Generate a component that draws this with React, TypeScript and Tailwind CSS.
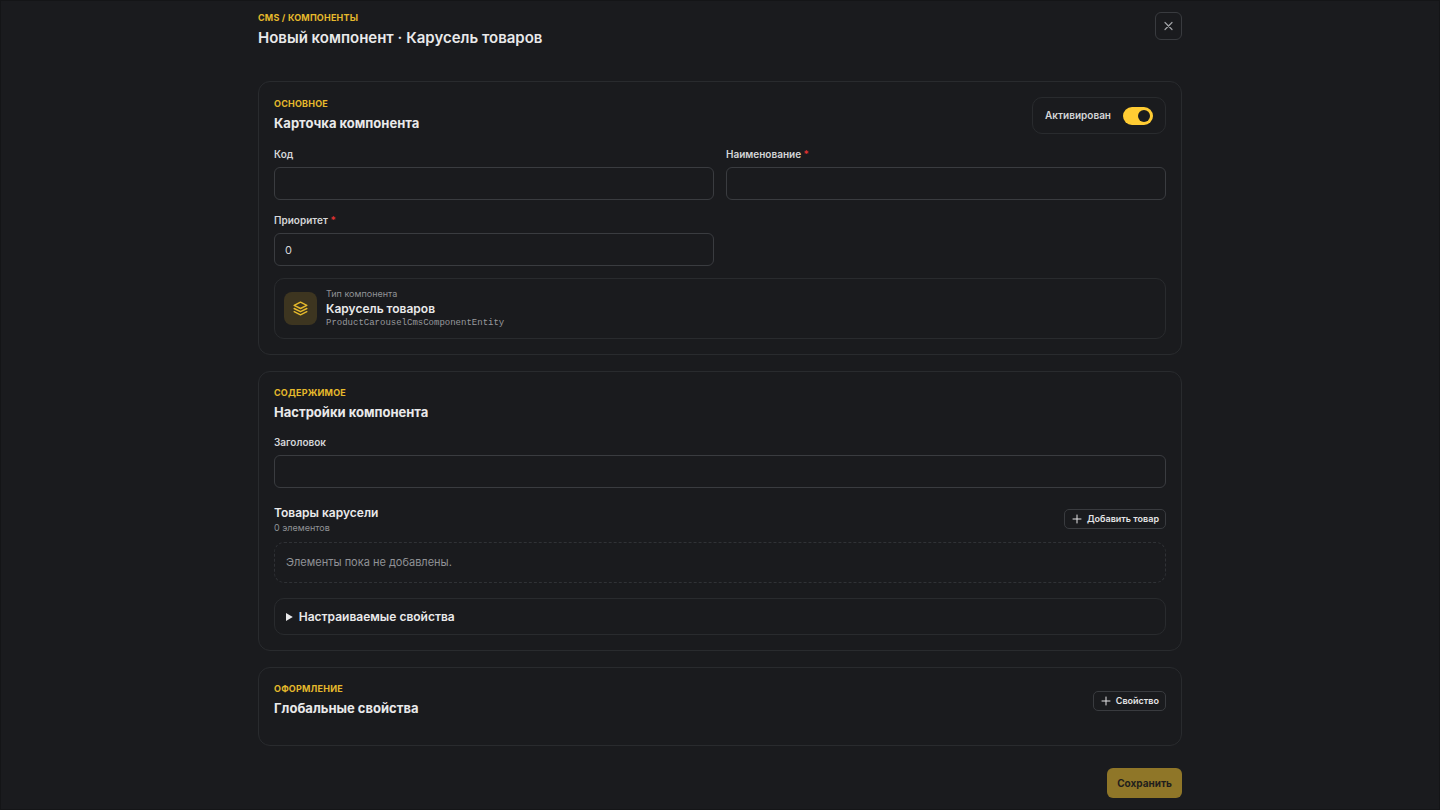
import { useState, type ReactNode } from "react";

function SectionHeading({ eyebrow, title, children }: { eyebrow: string; title: string; children?: ReactNode }) {
  return (
    <div className="flex items-center justify-between gap-4">
      <div className="flex flex-col gap-[3px]">
        <p className="text-[9px] leading-3 font-bold uppercase tracking-[0.2px] text-[#e5b92c]">{eyebrow}</p>
        <h2 className="text-[13px] leading-5 font-bold text-[#e9e9ea]">{title}</h2>
      </div>
      {children}
    </div>
  );
}

function Card({ children }: { children: ReactNode }) {
  return (
    <section className="flex flex-col gap-3 rounded-xl border border-[#292b2e] bg-[#1a1b1e] p-[15px]">{children}</section>
  );
}

function Field({
  id,
  label,
  required,
  defaultValue,
}: {
  id: string;
  label: string;
  required?: boolean;
  defaultValue?: string;
}) {
  return (
    <div className="flex flex-col gap-[5px]">
      <label htmlFor={id} className="text-[10px] leading-4 font-semibold text-[#d5d6d8]">
        {label}
        {required && <span className="text-[#e03131]"> *</span>}
      </label>
      <input
        id={id}
        type="text"
        required={required}
        defaultValue={defaultValue}
        className="h-[33px] w-full rounded-md border border-[#3a3c40] bg-[#1a1b1e] px-2.5 text-[11px] text-[#d5d6d8] shadow-none outline-none focus:border-[#ffcc33]"
      />
    </div>
  );
}

function AddButton({ children }: { children: ReactNode }) {
  return (
    <button
      type="button"
      className="flex h-5 items-center gap-1 rounded-[5px] border border-[#393b3f] px-1.5 text-[9px] font-semibold text-[#e4e4e5]"
    >
      <svg viewBox="0 0 12 12" className="size-3" fill="none" stroke="currentColor" strokeLinecap="round" aria-hidden="true">
        <path d="M6 2v8M2 6h8" />
      </svg>
      {children}
    </button>
  );
}

export default function App() {
  const [active, setActive] = useState(true);

  return (
    <div className="min-h-screen border border-[#141517] bg-[#1a1b1e] px-4 font-['Inter','Liberation_Sans',sans-serif] text-[#e9e9ea]">
      <form className="mx-auto flex max-w-[924px] flex-col pt-[11px] pb-[11px]" onSubmit={(e) => e.preventDefault()}>
        <header className="flex items-start justify-between pb-8">
          <div className="flex flex-col gap-[3px]">
            <p className="text-[9px] leading-3 font-bold uppercase tracking-[0.2px] text-[#e5b92c]">CMS / Компоненты</p>
            <h1 className="text-[15px] leading-[22px] font-semibold">Новый компонент · Карусель товаров</h1>
          </div>
          <button
            type="button"
            aria-label="Закрыть"
            className="flex h-7 w-[27px] items-center justify-center rounded-md border border-[#393b3f] text-[#a0a2a6]"
          >
            <svg viewBox="0 0 12 12" className="h-3 w-[13px]" fill="none" stroke="currentColor" strokeWidth="1.2" strokeLinecap="round" aria-hidden="true">
              <path d="M2.5 2.5l7 7M9.5 2.5l-7 7" />
            </svg>
          </button>
        </header>

        <div className="flex flex-col gap-4">
          <Card>
            <SectionHeading eyebrow="Основное" title="Карточка компонента">
              <label className="flex h-[37px] cursor-pointer items-center gap-3 rounded-[10px] border border-[#292b2e] px-3 text-[10px] font-semibold text-[#d5d6d8]">
                Активирован
                <span className="relative flex items-center">
                  <input
                    type="checkbox"
                    role="switch"
                    checked={active}
                    onChange={(e) => setActive(e.target.checked)}
                    className="peer h-[18px] w-[30px] cursor-pointer appearance-none rounded-full bg-[#3a3c40] checked:bg-[#ffcc33]"
                  />
                  <span className="pointer-events-none absolute left-[3px] size-3 rounded-full bg-[#1a1b1e] peer-checked:left-[15px]" />
                </span>
              </label>
            </SectionHeading>
            <div className="grid grid-cols-2 gap-3">
              <Field id="code" label="Код" />
              <Field id="name" label="Наименование" required />
              <Field id="priority" label="Приоритет" required defaultValue="0" />
            </div>
            <div className="flex h-[61px] items-center gap-[9px] rounded-[10px] border border-[#292b2e] px-[9px]">
              <div className="flex size-[33px] items-center justify-center rounded-lg bg-[#3d3520] text-[#e5b92c]">
                <svg
                  viewBox="0 0 24 24"
                  className="size-[19px]"
                  fill="none"
                  stroke="currentColor"
                  strokeWidth="1.8"
                  strokeLinecap="round"
                  strokeLinejoin="round"
                  aria-hidden="true"
                >
                  <path d="M12 4l-8 4l8 4l8 -4l-8 -4" />
                  <path d="M4 12l8 4l8 -4" />
                  <path d="M4 16l8 4l8 -4" />
                </svg>
              </div>
              <div className="flex flex-col">
                <span className="text-[9px] leading-3 text-[#909296]">Тип компонента</span>
                <span className="text-[12px] leading-[18px] font-semibold">Карусель товаров</span>
                <code className="font-['Liberation_Mono',monospace] text-[9px] leading-[11px] text-[#98999d]">
                  ProductCarouselCmsComponentEntity
                </code>
              </div>
            </div>
          </Card>

          <Card>
            <SectionHeading eyebrow="Содержимое" title="Настройки компонента" />
            <Field id="heading" label="Заголовок" />
            <div className="flex flex-col gap-[9px] pt-1">
              <div className="flex items-center justify-between">
                <div>
                  <h3 className="text-[12px] leading-[18px] font-semibold">Товары карусели</h3>
                  <p className="text-[9px] leading-[11px] text-[#909296]">0 элементов</p>
                </div>
                <AddButton>Добавить товар</AddButton>
              </div>
              <p className="rounded-[10px] border border-dashed border-[#303236] px-[11px] py-[11px] text-[11px] leading-[17px] text-[#909296]">
                Элементы пока не добавлены.
              </p>
            </div>
            <details className="mt-[3px] rounded-[10px] border border-[#292b2e] px-[11px]">
              <summary className="cursor-pointer py-2 text-[12px] leading-[19px] font-semibold">Настраиваемые свойства</summary>
            </details>
          </Card>

          <Card>
            <div className="pb-3">
              <SectionHeading eyebrow="Оформление" title="Глобальные свойства">
                <AddButton>Свойство</AddButton>
              </SectionHeading>
            </div>
          </Card>
        </div>

        <footer className="flex justify-end pt-[22px]">
          <button
            type="submit"
            disabled
            className="h-[30px] rounded-md bg-[#8f7628] px-2.5 text-[10px] font-bold text-[#1f1e1c]"
          >
            Сохранить
          </button>
        </footer>
      </form>
    </div>
  );
}
